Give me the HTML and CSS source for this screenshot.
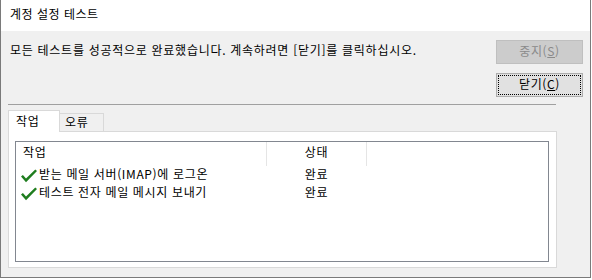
FILE: index.html
```html
<!DOCTYPE html>
<html lang="ko">
<head>
<meta charset="utf-8">
<link rel="stylesheet" href="styles.css">
</head>
<body>
<div class="window">
  <div class="titlebar">계정 설정 테스트</div>
  <div class="main">
    <div class="top">
      <div class="message">모든 테스트를 성공적으로 완료했습니다. 계속하려면 [닫기]를 클릭하십시오.</div>
      <div class="buttons">
        <button class="btn btn-disabled" disabled>중지(<u>S</u>)</button>
        <button class="btn btn-focus">닫기(<u>C</u>)</button>
      </div>
    </div>
    <div class="sep"></div>
    <div class="tabs">
      <div class="tab tab-active">작업</div>
      <div class="tab tab-inactive">오류</div>
    </div>
    <div class="panel">
      <div class="list">
        <div class="header">
          <div class="hcell col1">작업</div>
          <div class="hcell col2">상태</div>
        </div>
        <div class="row">
          <div class="cell col1">
            <svg class="check" width="16" height="16" viewBox="0 0 16 16"><polygon points="0,8.6 1.9,7 5,10.4 14.3,1.4 16,3 5,14.2" fill="#1f7d1f"/></svg>
            <span>받는 메일 서버(IMAP)에 로그온</span>
          </div>
          <div class="cell col2">완료</div>
        </div>
        <div class="row">
          <div class="cell col1">
            <svg class="check" width="16" height="16" viewBox="0 0 16 16"><polygon points="0,8.6 1.9,7 5,10.4 14.3,1.4 16,3 5,14.2" fill="#1f7d1f"/></svg>
            <span>테스트 전자 메일 메시지 보내기</span>
          </div>
          <div class="cell col2">완료</div>
        </div>
      </div>
    </div>
  </div>
</div>
</body>
</html>
```
FILE: styles.css
```css
html, body {
  margin: 0;
  padding: 0;
  background: #ffffff;
}
body {
  font-family: "Noto Sans CJK KR", "Noto Sans", sans-serif;
  font-size: 12px;
  letter-spacing: 0.65px;
  color: #000;
}
.window {
  width: 591px;
  height: 278px;
  box-sizing: border-box;
  border: 1px solid #7a7a7a;
  border-top: none;
  background: #f0f0f0;
}
.titlebar {
  height: 31px;
  box-sizing: border-box;
  background: #fff;
  padding: 8px 0 0 9px;
  line-height: 12px;
  letter-spacing: 0.5px;
}
.main {
  padding: 9px 7px 0 7px;
}
.top {
  display: flex;
  height: 57px;
}
.message {
  flex: 1;
  padding: 4px 0 0 2px;
  line-height: 12px;
  letter-spacing: 0.72px;
}
.buttons {
  display: flex;
  flex-direction: column;
  gap: 9px;
  width: 87px;
}
.btn {
  width: 87px;
  height: 24px;
  box-sizing: border-box;
  margin: 0;
  padding: 0 0 2px 0;
  font-family: inherit;
  font-size: 12px;
  letter-spacing: 0.6px;
  line-height: 20px;
  text-align: center;
  border-radius: 0;
}
.btn-disabled {
  background: #cccccc;
  border: 1px solid #bfbfbf;
  color: #8a8a8a;
}
.btn-focus {
  background: #e1e1e1;
  border: 1px solid #adadad;
  color: #000;
  outline: 1px dotted #000;
  outline-offset: -3px;
}
.sep {
  width: 548px;
  height: 1px;
  margin-top: 7px;
  background: #a0a0a0;
}
.tabs {
  margin-top: 5px;
  height: 21px;
  display: flex;
  align-items: flex-end;
}
.tab {
  box-sizing: border-box;
  line-height: 12px;
}
.tab-active {
  position: relative;
  z-index: 1;
  width: 52px;
  height: 22px;
  margin-bottom: -1px;
  background: #fff;
  border: 1px solid #d9d9d9;
  border-bottom: none;
  padding: 4px 0 0 7px;
}
.tab-inactive {
  width: 44px;
  height: 18px;
  background: #f0f0f0;
  border-top: 1px solid #d9d9d9;
  border-right: 1px solid #d9d9d9;
  padding: 2px 0 0 5px;
}
.panel {
  width: 549px;
  height: 137px;
  box-sizing: border-box;
  background: #fff;
  border: 1px solid #d9d9d9;
  padding: 9px 7px 5px 6px;
}
.list {
  width: 534px;
  height: 121px;
  box-sizing: border-box;
  border: 1px solid #828790;
  background: #fff;
}
.header {
  display: flex;
  height: 24px;
}
.hcell {
  box-sizing: border-box;
  height: 24px;
  border-right: 1px solid #e5e5e5;
  padding-top: 4px;
  line-height: 12px;
}
.col1 {
  width: 251px;
  box-sizing: border-box;
}
.col2 {
  width: 100px;
  box-sizing: border-box;
  text-align: center;
}
.hcell.col1 {
  padding-left: 7px;
}
.row {
  display: flex;
  height: 18px;
}
.cell {
  padding-top: 2px;
  line-height: 12px;
}
.cell.col1 {
  display: flex;
  align-items: flex-start;
  padding-left: 5px;
}
.check {
  display: block;
  margin-right: 2px;
  flex: none;
}
.cell.col2 {
  padding-right: 1px;
}
```
